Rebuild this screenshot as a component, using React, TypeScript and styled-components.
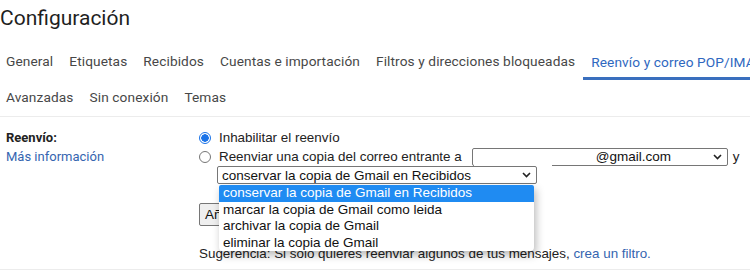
import React from "react";
import styled, { createGlobalStyle } from "styled-components";

const Global = createGlobalStyle`
  html, body { margin: 0; padding: 0; background: #fff; }
  body { width: 750px; height: 275px; overflow: hidden; font-family: Roboto, "Liberation Sans", Arial, sans-serif; }
  * { box-sizing: border-box; }
`;

const Page = styled.div`
  width: 750px;
  height: 275px;
  overflow: hidden;
  position: relative;
`;

const Title = styled.h1`
  margin: 0;
  padding-left: 0;
  height: 36px;
  line-height: 36px;
  font-family: Roboto, "Liberation Sans", sans-serif;
  font-weight: 400;
  font-size: 21px;
  color: #1f1f1f;
  white-space: nowrap;
`;

const TabRow = styled.div<{ $first?: boolean }>`
  display: flex;
  margin-left: -2px;
  margin-top: ${(p) => (p.$first ? "8px" : "0")};
  height: ${(p) => (p.$first ? "36px" : "37px")};
  border-bottom: ${(p) => (p.$first ? "none" : "1px solid #ececec")};
  white-space: nowrap;
`;

const Tab = styled.div<{ $active?: boolean }>`
  display: flex;
  align-items: center;
  padding: 0 8px;
  height: 36px;
  font-size: 13.7px;
  color: ${(p) => (p.$active ? "#2f68c0" : "#474747")};
  border-bottom: 3px solid ${(p) => (p.$active ? "#3a6fbe" : "transparent")};
  padding-top: ${(p) => (p.$active ? "3px" : "0")};
  flex-shrink: 0;
  letter-spacing: 0.1px;
`;

const Section = styled.div`
  display: flex;
  padding-top: 11px;
  height: 153px;
  border-bottom: 1px solid #ececec;
`;

const LabelCol = styled.div`
  width: 199px;
  padding-left: 6px;
  flex-shrink: 0;
  font-size: 13px;
  line-height: 19px;
`;

const SectionLabel = styled.div`
  font-weight: 700;
  color: #222;
`;

const Link = styled.span`
  color: #3565b0;
`;

const Body = styled.div`
  flex: 1;
  font-size: 13.4px;
  line-height: 19px;
  color: #222;
  font-family: "Liberation Sans", Arial, sans-serif;
`;

const Line = styled.div`
  display: flex;
  align-items: center;
  height: 19px;
  white-space: nowrap;
`;

const Radio = styled.span<{ $checked?: boolean }>`
  display: inline-block;
  width: 12px;
  height: 12px;
  border-radius: 50%;
  margin-right: 8px;
  flex-shrink: 0;
  border: 1px solid ${(p) => (p.$checked ? "#1a73e8" : "#767676")};
  background: ${(p) => (p.$checked ? "radial-gradient(circle, #1a73e8 0 3.5px, #fff 4px)" : "#fff")};
`;

const Select = styled.div<{ $width: number; $pad: number }>`
  position: relative;
  display: flex;
  align-items: center;
  width: ${(p) => p.$width}px;
  height: 18px;
  border: 1px solid #767676;
  border-radius: 2px;
  padding-left: ${(p) => p.$pad}px;
  font-size: 13.5px;
  color: #111;
  background: #fff;
  flex-shrink: 0;
`;

const Chevron = styled.svg`
  position: absolute;
  right: 5px;
  top: 5px;
`;

const Redact = styled.div`
  position: absolute;
  left: 1px;
  bottom: -3px;
  width: 78px;
  height: 8px;
  background: #fff;
`;

const After = styled.span`
  margin-left: 5px;
`;

const Indent = styled.div`
  padding-left: 18px;
  position: relative;
`;

const Dropdown = styled.div`
  position: absolute;
  left: 20px;
  top: 19px;
  width: 315px;
  padding: 0;
  background: #fff;
  border-radius: 0 0 4px 4px;
  box-shadow: 2px 4px 8px rgba(0, 0, 0, 0.28);
  z-index: 2;
  font-size: 13.5px;
  line-height: 16.5px;
`;

const Option = styled.div<{ $selected?: boolean }>`
  padding-left: 4px;
  height: 16.5px;
  color: ${(p) => (p.$selected ? "#fff" : "#111")};
  background: ${(p) => (p.$selected ? "#1f8bf2" : "transparent")};
  border-radius: ${(p) => (p.$selected ? "2px 2px 0 0" : "0")};
  white-space: nowrap;
`;

const Button = styled.div`
  display: inline-flex;
  align-items: center;
  margin-top: 19px;
  height: 23px;
  padding: 0 5px;
  border: 1px solid #767676;
  border-radius: 2px;
  background: #efefef;
  font-size: 13.5px;
  color: #111;
  white-space: nowrap;
`;

const Hint = styled.div`
  margin-top: 18px;
  white-space: nowrap;
  color: #222;
`;

const ChevronIcon = () => (
  <Chevron width="9" height="6" viewBox="0 0 9 6">
    <path d="M1 1 L4.5 4.5 L8 1" fill="none" stroke="#222" strokeWidth="1.6" />
  </Chevron>
);

export default function App() {
  const row1 = ["General", "Etiquetas", "Recibidos", "Cuentas e importación", "Filtros y direcciones bloqueadas"];
  const row2 = ["Avanzadas", "Sin conexión", "Temas"];
  const options = [
    "conservar la copia de Gmail en Recibidos",
    "marcar la copia de Gmail como leida",
    "archivar la copia de Gmail",
    "eliminar la copia de Gmail",
  ];
  return (
    <Page>
      <Global />
      <Title>Configuración</Title>
      <TabRow $first>
        {row1.map((t) => (
          <Tab key={t}>{t}</Tab>
        ))}
        <Tab $active>Reenvío y correo POP/IMAP</Tab>
      </TabRow>
      <TabRow>
        {row2.map((t) => (
          <Tab key={t}>{t}</Tab>
        ))}
      </TabRow>
      <Section>
        <LabelCol>
          <SectionLabel>Reenvío:</SectionLabel>
          <Link>Más información</Link>
        </LabelCol>
        <Body>
          <Line>
            <Radio $checked />
            Inhabilitar el reenvío
          </Line>
          <Line>
            <Radio />
            Reenviar una copia del correo entrante a
            <Select $width={256} $pad={123} style={{ marginLeft: 10 }}>
              @gmail.com
              <ChevronIcon />
              <Redact />
            </Select>
            <After>y</After>
          </Line>
          <Indent>
            <Select $width={320} $pad={4}>
              conservar la copia de Gmail en Recibidos
              <ChevronIcon />
            </Select>
            <Dropdown>
              {options.map((o, i) => (
                <Option key={o} $selected={i === 0}>
                  {o}
                </Option>
              ))}
            </Dropdown>
          </Indent>
          <Button>Añadir una dirección de reenvío</Button>
          <Hint>
            Sugerencia: Si solo quieres reenviar algunos de tus mensajes, <Link>crea un filtro.</Link>
          </Hint>
        </Body>
      </Section>
    </Page>
  );
}
